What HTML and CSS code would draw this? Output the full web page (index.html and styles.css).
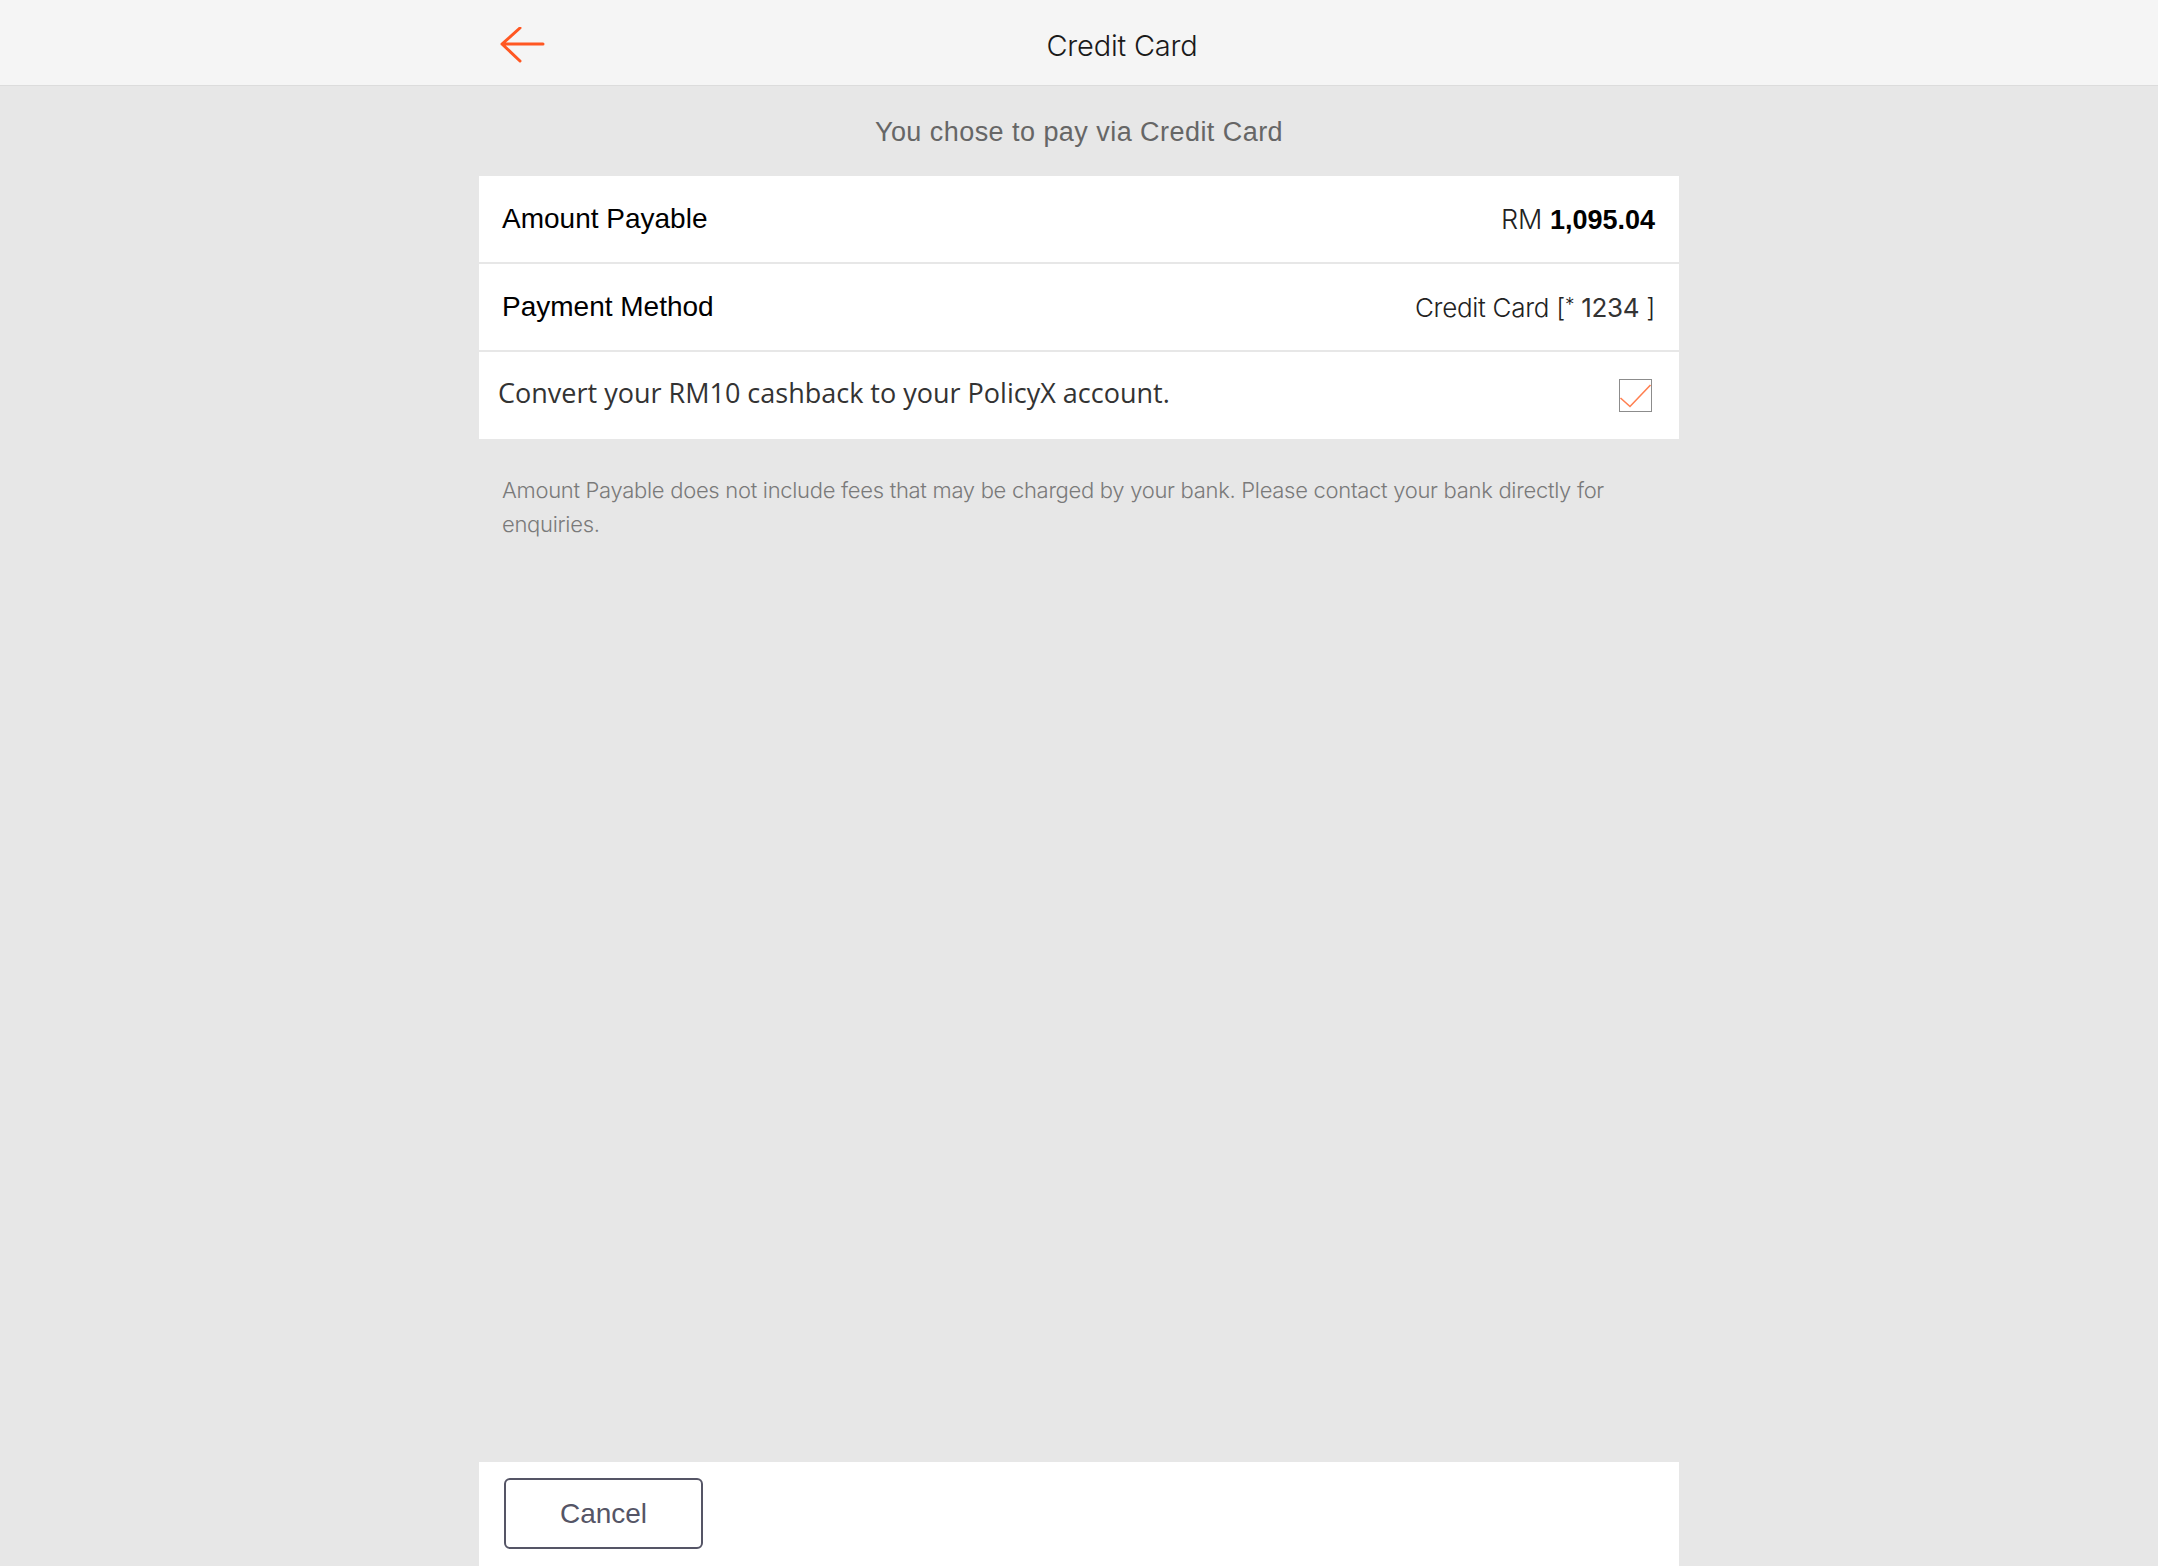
FILE: index.html
```html
<!DOCTYPE html>
<html lang="en">
<head>
<meta charset="utf-8">
<title>Credit Card</title>
<link rel="stylesheet" href="styles.css">
</head>
<body>
<div class="app">
  <header class="topbar">
    <div class="topbar-inner">
      <button class="back" type="button" aria-label="Back">
        <svg width="46" height="38" viewBox="0 0 46 38" aria-hidden="true">
          <path d="M2 17 H43 M20 1 L2 17 L20 34" fill="none" stroke="#ff5722" stroke-width="3" stroke-linecap="round" stroke-linejoin="round"/>
        </svg>
      </button>
      <h1 class="title">Credit Card</h1>
    </div>
  </header>

  <main class="content">
    <p class="lead">You chose to pay via Credit Card</p>

    <div class="list">
      <div class="row">
        <span class="label">Amount Payable</span>
        <span class="value"><span class="cur">RM</span> <strong class="amount">1,095.04</strong></span>
      </div>
      <div class="row">
        <span class="label">Payment Method</span>
        <span class="value method">Credit Card [<span class="star">*</span> <span class="digits">1234</span> ]</span>
      </div>
      <label class="row row-opt">
        <span class="opt-text">Convert your RM10 cashback to your PolicyX account.</span>
        <span class="check">
          <svg width="33" height="33" viewBox="0 0 33 33" aria-hidden="true">
            <rect x="0.5" y="0.5" width="32" height="32" fill="#fff" stroke="#8c8c8c" stroke-width="1"/>
            <path d="M1.5 19 L11 27.5 L31.5 6" fill="none" stroke="#ff7f50" stroke-width="1.6"/>
          </svg>
        </span>
      </label>
    </div>

    <p class="note">Amount Payable does not include fees that may be charged by your bank. Please contact your bank directly for enquiries.</p>
  </main>

  <footer class="footer">
    <button class="cancel" type="button">Cancel</button>
  </footer>
</div>
</body>
</html>
```

FILE: styles.css
```css
html, body {
  margin: 0;
  padding: 0;
  height: 100%;
}

body {
  background: #e7e7e7;
  font-family: "Liberation Sans", Arial, sans-serif;
  color: #000;
}

.app {
  min-height: 100vh;
  display: flex;
  flex-direction: column;
}

.topbar {
  background: #f5f5f5;
  border-bottom: 1px solid #dcdcdc;
  height: 86px;
  box-sizing: border-box;
}

.topbar-inner {
  width: 1200px;
  margin: 0 auto;
  height: 100%;
  display: flex;
  align-items: center;
}

.back {
  width: 86px;
  height: 86px;
  padding: 6px 0 0 21px;
  border: 0;
  background: transparent;
  display: flex;
  align-items: center;
  justify-content: flex-start;
  cursor: pointer;
}

.back svg {
  display: block;
}

.title {
  flex: 1;
  margin: 0;
  text-align: center;
  font-family: Inter, Roboto, "Liberation Sans", sans-serif;
  font-weight: 300;
  font-size: 29px;
  letter-spacing: -0.2px;
  color: #1a1a1a;
  padding-top: 6px;
}

.content {
  flex: 1;
  width: 1200px;
  margin: 0 auto;
}

.lead {
  margin: 0;
  height: 90px;
  box-sizing: border-box;
  padding-top: 6px;
  line-height: 80px;
  text-align: center;
  font-size: 27px;
  letter-spacing: 0.45px;
  color: #666;
  overflow: hidden;
}

.list {
  display: flex;
  flex-direction: column;
  gap: 2px;
}

.row {
  background: #fff;
  height: 86px;
  display: flex;
  align-items: center;
  justify-content: space-between;
  padding: 0 24px 0 23px;
  box-sizing: border-box;
}

.row-opt {
  height: 87px;
  padding-left: 19px;
  padding-right: 27px;
  cursor: pointer;
}

.label {
  font-size: 28px;
  color: #000;
}

.value {
  font-size: 27px;
  color: #000;
}

.cur {
  font-family: Inter, Roboto, "Liberation Sans", sans-serif;
  font-weight: 300;
  color: #222;
}

.amount {
  font-weight: 700;
}

.method {
  font-family: Inter, Roboto, "Liberation Sans", sans-serif;
  font-weight: 300;
  color: #222;
  font-size: 26px;
  letter-spacing: -0.3px;
}

.star {
  position: relative;
  top: -6px;
  font-size: 19px;
}

.digits {
  font-weight: 400;
  color: #333;
}

.opt-text {
  font-family: "Open Sans", "Noto Sans", sans-serif;
  font-size: 27px;
  color: #333;
  padding-bottom: 6px;
}

.check {
  display: block;
  width: 33px;
  height: 33px;
}

.check svg {
  display: block;
}

.note {
  margin: 0;
  padding: 34px 40px 0 23px;
  font-family: Inter, Roboto, "Liberation Sans", sans-serif;
  font-weight: 300;
  font-size: 22px;
  letter-spacing: -0.3px;
  line-height: 34px;
  color: #7a7a7a;
}

.footer {
  width: 1200px;
  margin: 0 auto;
  background: #fff;
  height: 104px;
  box-sizing: border-box;
  padding: 16px 0 0 25px;
}

.cancel {
  width: 199px;
  height: 71px;
  border: 2px solid #555566;
  border-radius: 6px;
  background: #fff;
  font-family: "Liberation Sans", Arial, sans-serif;
  font-size: 28px;
  color: #555566;
  cursor: pointer;
  padding: 0;
}
```
